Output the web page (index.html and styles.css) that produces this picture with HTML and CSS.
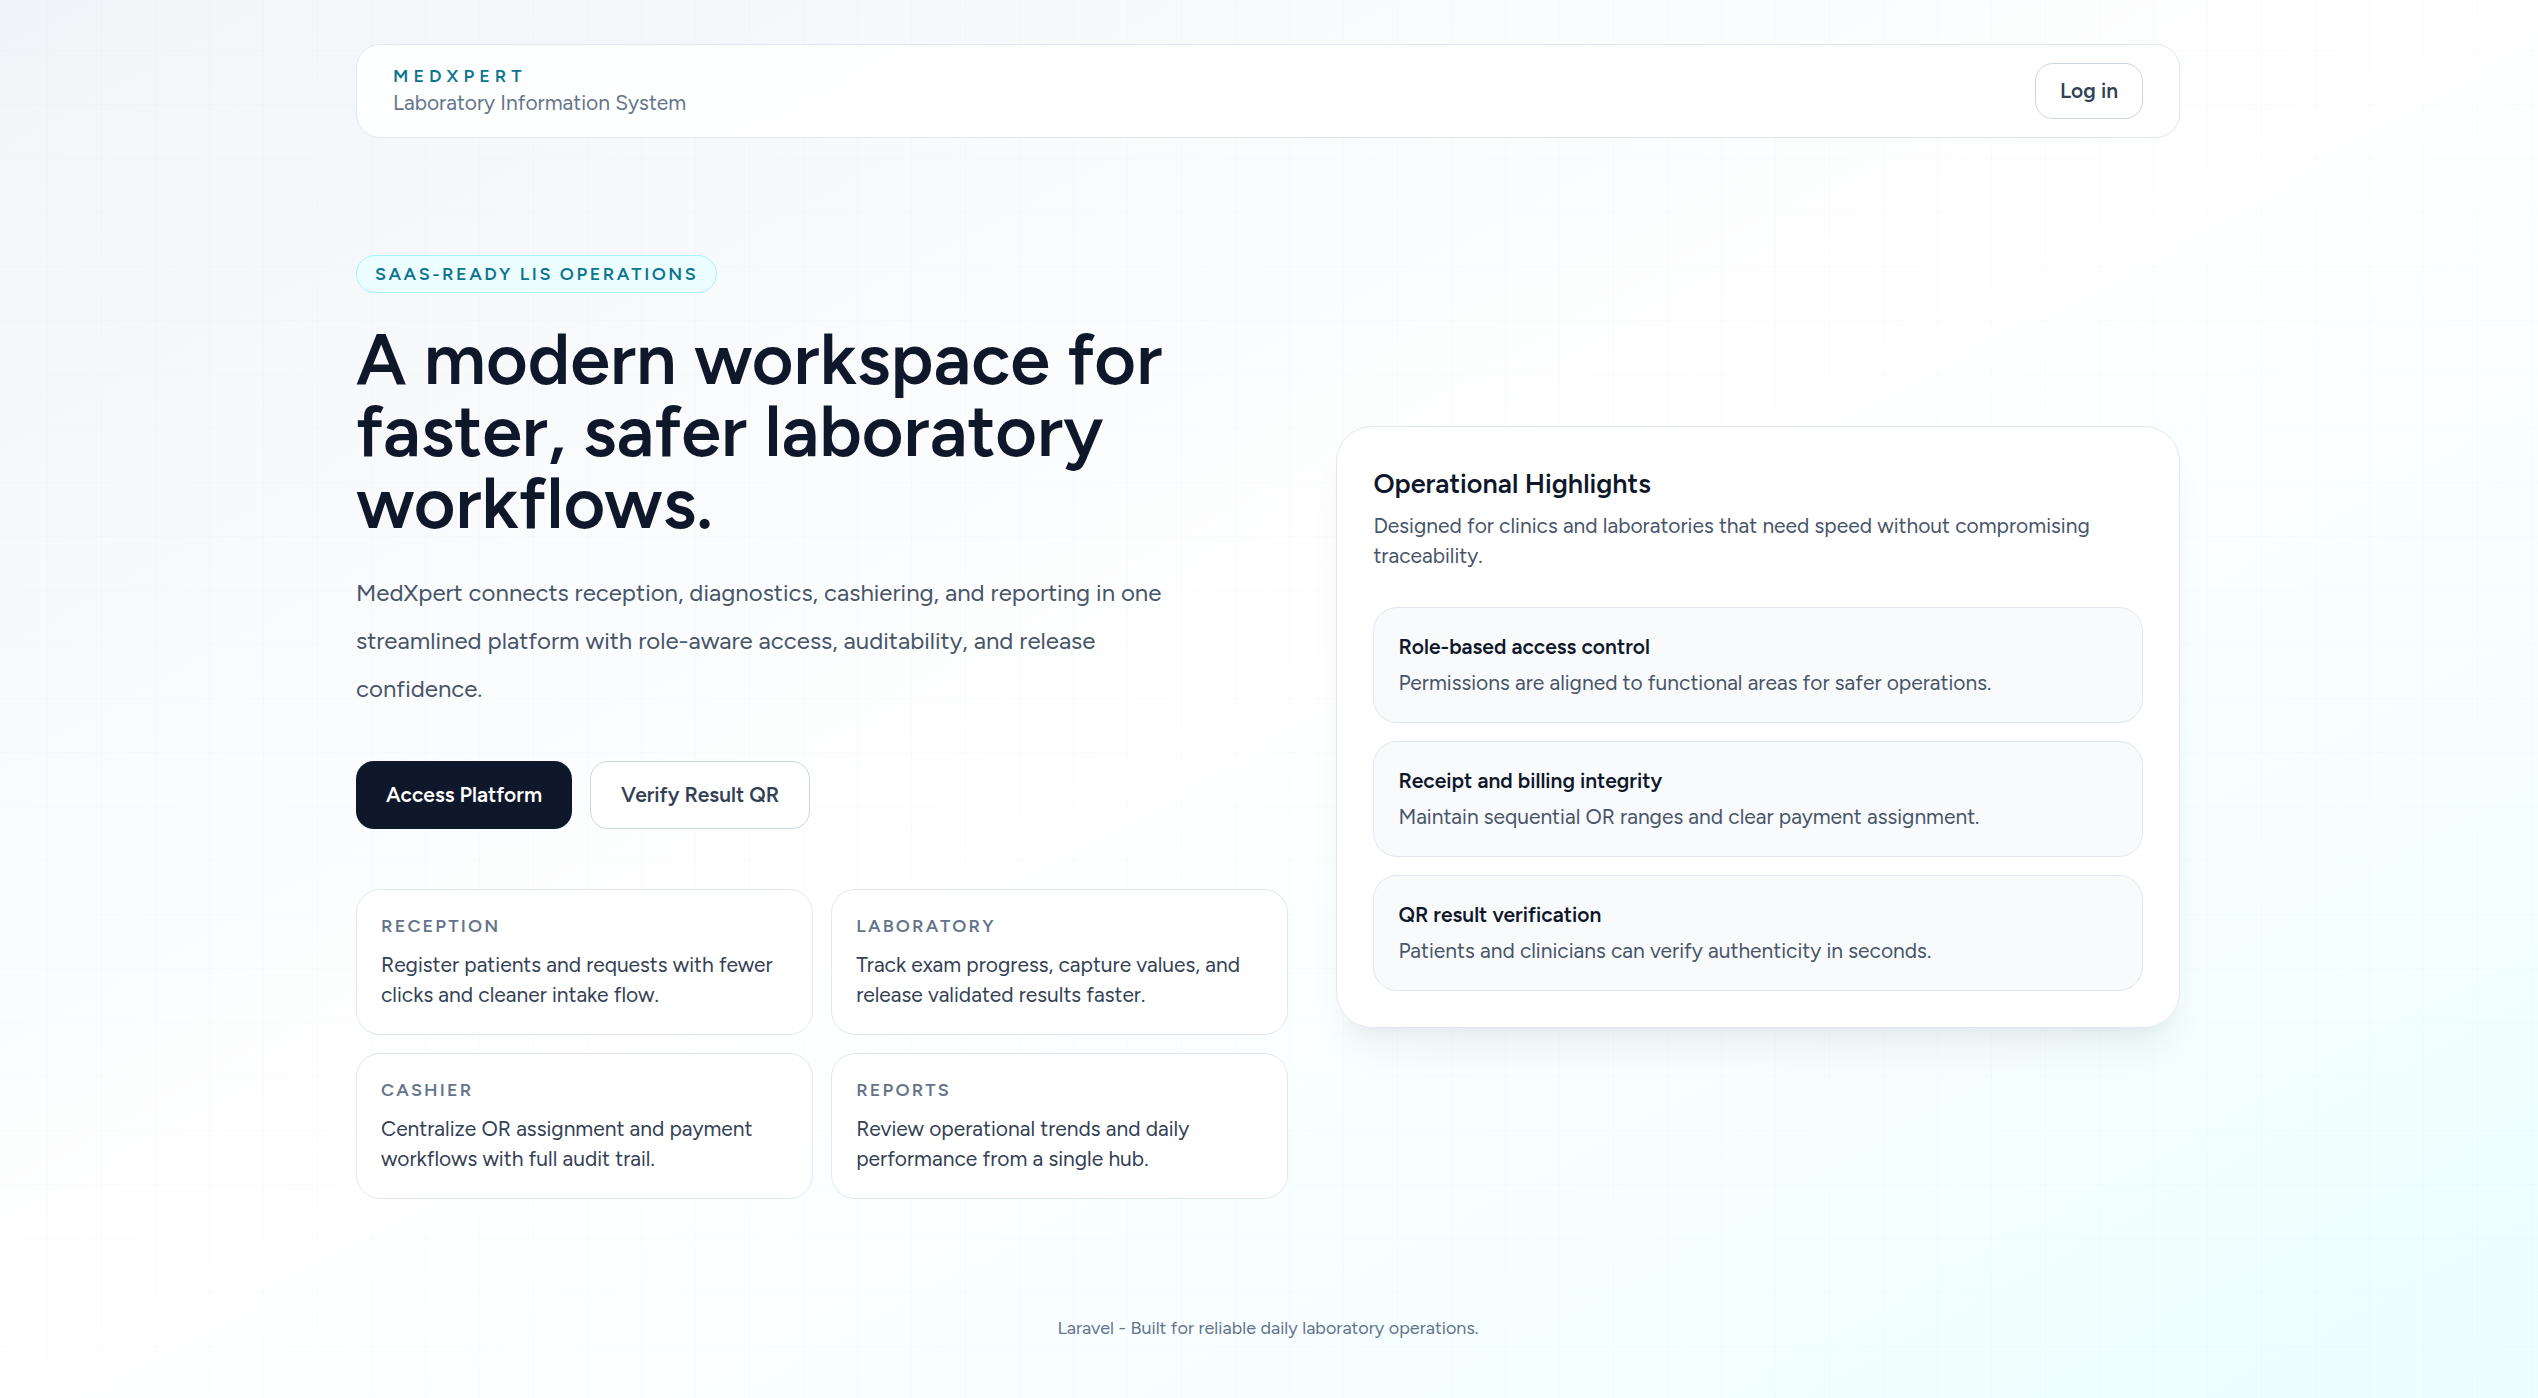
FILE: index.html
```html
<!DOCTYPE html>
<html lang="en">
<head>
  <meta charset="utf-8">
  <meta name="viewport" content="width=device-width, initial-scale=1">
  <title>MedXpert</title>
  <link rel="stylesheet" href="styles.css">
</head>
<body>
  <div class="page">
    <header class="topbar">
      <div class="brand">
        <p class="brand-name">MEDXPERT</p>
        <p class="brand-tagline">Laboratory Information System</p>
      </div>
      <nav>
        <a class="button button-outline button-small" href="#login">Log in</a>
      </nav>
    </header>

    <main class="hero">
      <section class="intro">
        <span class="badge">SAAS-READY LIS OPERATIONS</span>
        <h1 class="headline">A modern workspace for faster, safer laboratory workflows.</h1>
        <p class="lead">MedXpert connects reception, diagnostics, cashiering, and reporting in one streamlined platform with role-aware access, auditability, and release confidence.</p>
        <div class="actions">
          <a class="button button-dark" href="#platform">Access Platform</a>
          <a class="button button-outline" href="#verify">Verify Result QR</a>
        </div>
        <div class="modules">
          <article class="module">
            <h2 class="module-label">RECEPTION</h2>
            <p class="module-text">Register patients and requests with fewer clicks and cleaner intake flow.</p>
          </article>
          <article class="module">
            <h2 class="module-label">LABORATORY</h2>
            <p class="module-text">Track exam progress, capture values, and release validated results faster.</p>
          </article>
          <article class="module">
            <h2 class="module-label">CASHIER</h2>
            <p class="module-text">Centralize OR assignment and payment workflows with full audit trail.</p>
          </article>
          <article class="module">
            <h2 class="module-label">REPORTS</h2>
            <p class="module-text">Review operational trends and daily performance from a single hub.</p>
          </article>
        </div>
      </section>

      <section class="panel">
        <h2 class="panel-title">Operational Highlights</h2>
        <p class="panel-text">Designed for clinics and laboratories that need speed without compromising traceability.</p>
        <ul class="highlights">
          <li class="highlight">
            <h3 class="highlight-title">Role-based access control</h3>
            <p class="highlight-text">Permissions are aligned to functional areas for safer operations.</p>
          </li>
          <li class="highlight">
            <h3 class="highlight-title">Receipt and billing integrity</h3>
            <p class="highlight-text">Maintain sequential OR ranges and clear payment assignment.</p>
          </li>
          <li class="highlight">
            <h3 class="highlight-title">QR result verification</h3>
            <p class="highlight-text">Patients and clinicians can verify authenticity in seconds.</p>
          </li>
        </ul>
      </section>
    </main>

    <footer class="footer">Laravel - Built for reliable daily laboratory operations.</footer>
  </div>
</body>
</html>
```
FILE: styles.css
```css
*,
*::before,
*::after {
  box-sizing: border-box;
}

body,
h1,
h2,
h3,
p,
ul {
  margin: 0;
  padding: 0;
}

body {
  min-height: 100vh;
  padding-right: 2px;
  font-family: Figtree, "Noto Sans", sans-serif;
  font-size: 21px;
  line-height: 30px;
  color: #0f172a;
  /* faint ruled grid over a diagonal wash */
  background-image:
    linear-gradient(to right, rgba(15, 23, 42, 0.012) 1px, transparent 1px),
    linear-gradient(to bottom, rgba(15, 23, 42, 0.012) 1px, transparent 1px),
    linear-gradient(to bottom right, #f1f5f9, #ffffff, #ecfeff);
  background-size: 54px 54px, 54px 54px, 100% 100%;
  background-position: -7px -4px, -7px -4px, 0 0;
}

.page {
  display: flex;
  flex-direction: column;
  min-height: 100vh;
  max-width: 1896px;
  margin: 0 auto;
  padding: 44px 36px 58px;
}

.topbar {
  display: flex;
  align-items: center;
  justify-content: space-between;
  padding: 18px 36px;
  border: 1px solid #e2e8f0;
  border-radius: 24px;
  background: rgba(255, 255, 255, 0.9);
}

.brand-name {
  font-size: 18px;
  line-height: 24px;
  font-weight: 600;
  letter-spacing: 0.28em;
  color: #0e7490;
}

.brand-tagline {
  color: #64748b;
}

.button {
  display: inline-flex;
  align-items: center;
  justify-content: center;
  padding: 18px 30px;
  border-radius: 18px;
  font-weight: 600;
  text-decoration: none;
}

.button-dark {
  padding: 19px 30px;
  background: #0f172a;
  color: #ffffff;
}

.button-outline {
  border: 1px solid #cbd5e1;
  background: #ffffff;
  color: #334155;
}

.button-small {
  padding: 12px 24px;
}

.hero {
  display: grid;
  grid-template-columns: 21fr 19fr;
  gap: 48px;
  align-items: center;
  flex: 1;
  padding: 96px 0;
}

.badge {
  display: inline-block;
  padding: 6px 18px;
  border: 1px solid #a5f3fc;
  border-radius: 19px;
  background: #ecfeff;
  font-size: 18px;
  line-height: 24px;
  font-weight: 600;
  letter-spacing: 0.14em;
  color: #0e7490;
  vertical-align: top;
}

.headline {
  max-width: 864px;
  margin-top: 30px;
  font-size: 72px;
  line-height: 72px;
  font-weight: 600;
}

.lead {
  max-width: 864px;
  margin-top: 30px;
  font-size: 24px;
  line-height: 48px;
  color: #475569;
}

.actions {
  display: flex;
  flex-wrap: wrap;
  gap: 18px;
  margin-top: 48px;
}

.modules {
  display: grid;
  grid-template-columns: 1fr 1fr;
  gap: 18px;
  margin-top: 60px;
}

.module {
  padding: 24px;
  border: 1px solid #e2e8f0;
  border-radius: 24px;
  background: rgba(255, 255, 255, 0.9);
}

.module-label {
  font-size: 18px;
  line-height: 24px;
  font-weight: 600;
  letter-spacing: 0.12em;
  color: #64748b;
}

.module-text {
  margin-top: 12px;
  color: #334155;
}

.panel {
  padding: 36px;
  border: 1px solid #e2e8f0;
  border-radius: 36px;
  background: rgba(255, 255, 255, 0.95);
  box-shadow:
    0 30px 38px -8px rgba(15, 23, 42, 0.05),
    0 12px 15px -9px rgba(15, 23, 42, 0.05);
}

.panel-title {
  font-size: 27px;
  line-height: 42px;
  font-weight: 600;
}

.panel-text {
  margin-top: 6px;
  color: #475569;
}

.highlights {
  display: grid;
  gap: 18px;
  margin-top: 36px;
  list-style: none;
}

.highlight {
  padding: 24px;
  border: 1px solid #e2e8f0;
  border-radius: 24px;
  background: #f8fafc;
}

.highlight-title {
  font-size: 21px;
  line-height: 30px;
  font-weight: 600;
}

.highlight-text {
  margin-top: 6px;
  color: #475569;
}

.footer {
  font-size: 18px;
  line-height: 24px;
  text-align: center;
  color: #64748b;
}

@media (max-width: 1200px) {
  .hero,
  .modules {
    grid-template-columns: 1fr;
  }
}
```
